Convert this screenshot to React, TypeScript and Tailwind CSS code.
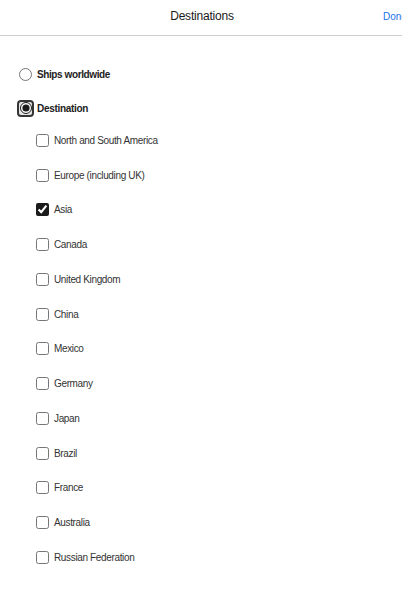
import { useState } from "react"

const regions = [
    "North and South America",
    "Europe (including UK)",
    "Asia",
    "Canada",
    "United Kingdom",
    "China",
    "Mexico",
    "Germany",
    "Japan",
    "Brazil",
    "France",
    "Australia",
    "Russian Federation",
]

export default function App() {
    const [mode, setMode] = useState("destination")
    const [picked, setPicked] = useState<string[]>(["Asia"])

    const toggle = (name: string) =>
        setPicked((p) => (p.includes(name) ? p.filter((x) => x !== name) : [...p, name]))

    return (
        <div className="relative w-[402px] h-[611px] overflow-hidden bg-white text-[#222] font-['Liberation_Sans',Arial,sans-serif]">
            <header className="relative h-[36px] border-b border-[#cfcfcf] flex items-center justify-center">
                <h1 className="text-[12px] font-medium tracking-[-0.2px] pb-[3px] pl-[2px] text-[#1a1a1a]">Destinations</h1>
                <button className="absolute left-[383px] top-[9px] text-[10px] text-[#1a73e8] whitespace-nowrap">
                    Done
                </button>
            </header>

            <div className="pt-[23px] flex flex-col gap-[4px]">
                <label className="h-[30px] pl-[19px] flex items-center gap-[5px]">
                    <input
                        type="radio"
                        name="ship"
                        checked={mode === "worldwide"}
                        onChange={() => setMode("worldwide")}
                        className="m-0 w-[13px] h-[13px] accent-[#1b1b1b]"
                    />
                    <span className="text-[10px] font-bold tracking-[-0.4px]">Ships worldwide</span>
                </label>
                <label className="h-[30px] pl-[17px] flex items-center gap-[3px]">
                    <span className="w-[17px] h-[17px] rounded-[4px] border-2 border-[#353535] bg-[#e6e6e6] flex items-center justify-center">
                        <input
                            type="radio"
                            name="ship"
                            checked={mode === "destination"}
                            onChange={() => setMode("destination")}
                            className="m-0 w-[12px] h-[12px] accent-[#1b1b1b]"
                        />
                    </span>
                    <span className="text-[10px] font-bold tracking-[-0.3px]">Destination</span>
                </label>
            </div>

            <ul className="flex flex-col">
                {regions.map((r) => (
                    <li key={r} className="h-[34.75px] pl-[36px] flex items-center">
                        <label className="flex items-center gap-[5px]">
                            <input
                                type="checkbox"
                                checked={picked.includes(r)}
                                onChange={() => toggle(r)}
                                className="m-0 w-[13px] h-[13px] accent-[#1b1b1b]"
                            />
                            <span className="text-[10px] tracking-[-0.35px] text-[#333]">{r}</span>
                        </label>
                    </li>
                ))}
            </ul>
        </div>
    )
}
